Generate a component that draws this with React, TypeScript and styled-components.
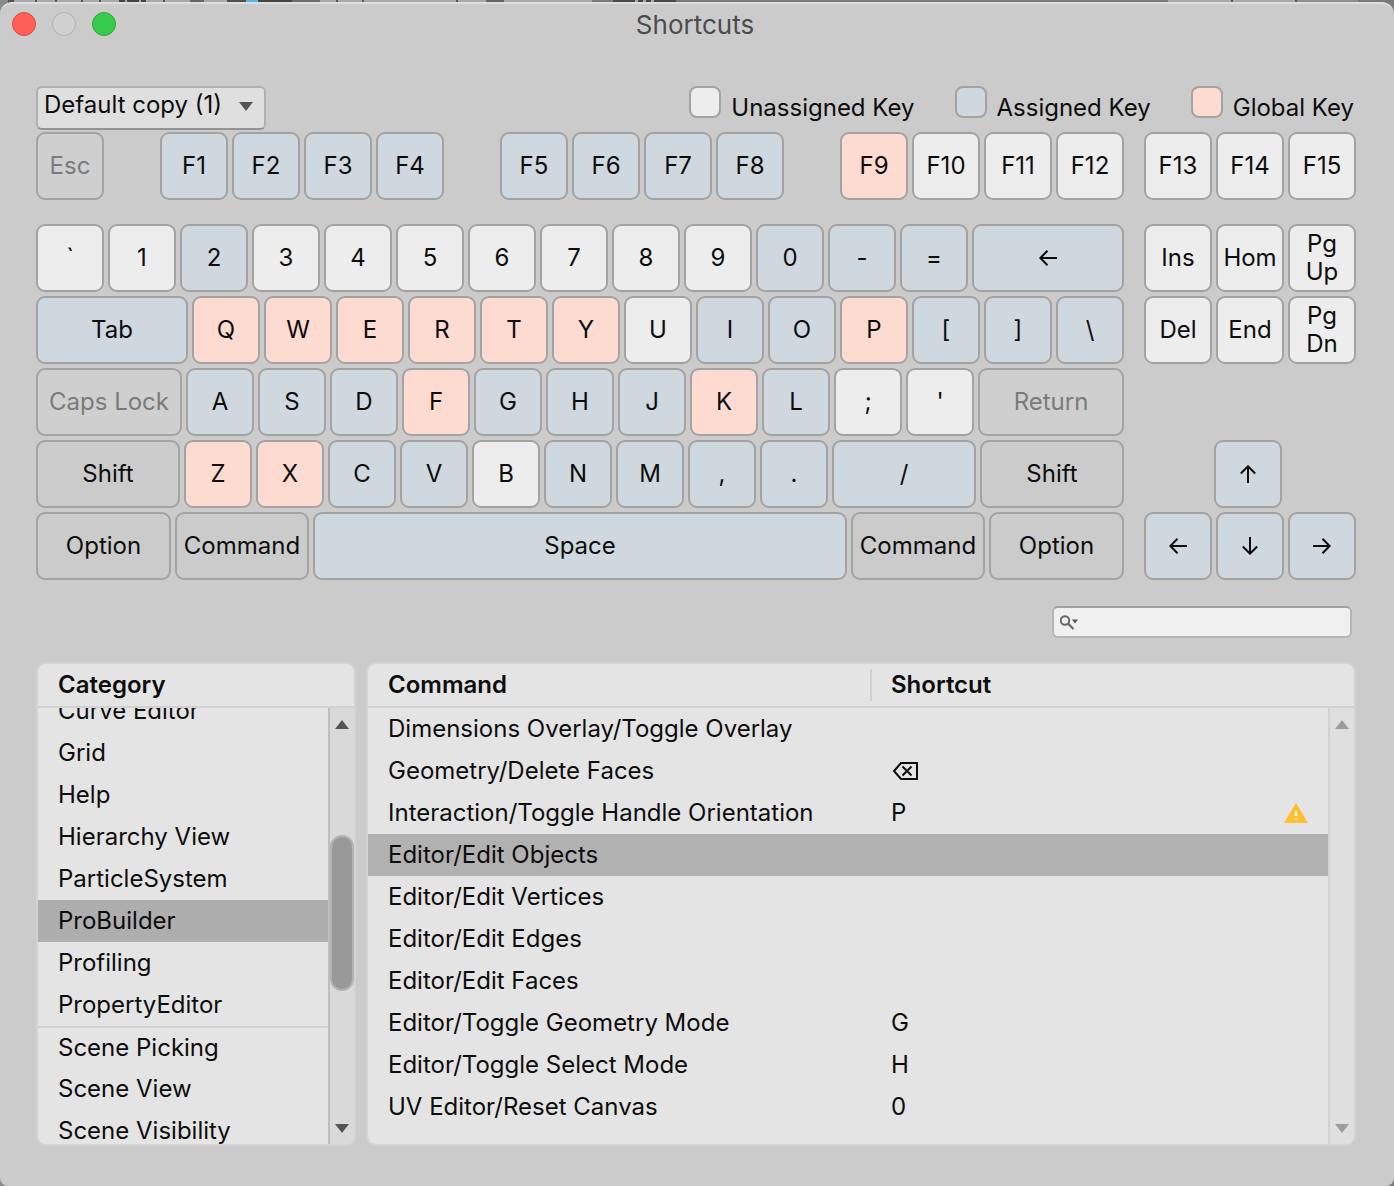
import React, { useLayoutEffect, useRef, useState } from "react";
import styled, { createGlobalStyle, css } from "styled-components";

type Tone = "free" | "assigned" | "global" | "system" | "modifier";

const keyFill: Record<Tone, string> = {
  free: "#ededed",
  assigned: "#cfd8de",
  global: "#fddbd0",
  system: "#cfcfcf",
  modifier: "#cbcbcb",
};

const Global = createGlobalStyle`
  *, *::before, *::after { box-sizing: border-box; }
  body {
    margin: 0;
    background: #7d7d7b;
    color: #0d0d0d;
    font: 24px/28px Inter, "Liberation Sans", sans-serif;
    font-optical-sizing: none;
    font-variation-settings: "opsz" 14;
  }
  button, input, select { font: inherit; color: inherit; font-variation-settings: inherit; }
`;

const Backdrop = styled.div`
  height: 100vh;
  min-height: 960px;
  padding-top: 2px;
  background: linear-gradient(
    90deg,
    #8a8a8a 0 8px, #555 8px 14px, #a9a9a9 14px 35px, #555 35px 37px, #a9a9a9 37px 55px,
    #555 55px 57px, #a9a9a9 57px 81px, #555 81px 83px, #a9a9a9 83px 99px, #555 99px 101px,
    #a9a9a9 101px 119px, #444 119px 125px, #a9a9a9 125px 127px, #444 127px 139px,
    #a9a9a9 139px 141px, #444 141px 146px, #a9a9a9 146px 163px, #555 163px 165px,
    #a9a9a9 165px 190px, #666 190px 204px, #a9a9a9 204px 227px, #505050 227px 246px,
    #55b4e0 246px 258px, #444 258px 292px, #6c6c6c 292px 320px, #a9a9a9 320px 336px,
    #555 336px 338px, #a9a9a9 338px 362px, #555 362px 364px, #a9a9a9 364px 456px,
    #555 456px 458px, #a9a9a9 458px 486px, #666 486px 504px, #a9a9a9 504px 592px,
    #7a7a78 592px 613px, #4a4a4a 613px 635px, #a9a9a9 635px 638px, #444 638px 643px,
    #a9a9a9 643px 646px, #444 646px 651px, #a9a9a9 651px 654px, #4a4a4a 654px 676px,
    #7a7a78 676px 1168px, #a9a9a9 1168px 1231px, #555 1231px 1233px, #a9a9a9 1233px 1295px,
    #555 1295px 1297px, #8e8e8c 1297px 1358px, #7a7a78 1358px
  );
`;

const Window = styled.main`
  display: flex;
  flex-direction: column;
  height: 100%;
  padding: 0 38px 40px 36px;
  background: #cbcbcb;
  border-top: 2px solid #dedede;
  border-radius: 12px 12px 8px 8px;
`;

const TitleBar = styled.header`
  display: grid;
  grid-template-columns: 1fr auto 1fr;
  align-items: center;
  height: 40px;
  margin: 0 -38px 0 -36px;
  padding: 0 16px 0 12px;
`;

const Lights = styled.div`
  display: flex;
  gap: 16px;
`;

const Light = styled.button<{ $fill: string; $edge: string }>`
  width: 24px;
  height: 24px;
  padding: 0;
  border: 1px solid ${(p) => p.$edge};
  border-radius: 50%;
  background: ${(p) => p.$fill};
`;

const Title = styled.h1`
  margin: 0;
  padding-top: 2px;
  color: #4c4c4c;
  font-size: 26px;
  font-weight: 400;
  line-height: 32px;
`;

const Toolbar = styled.div`
  display: flex;
  justify-content: space-between;
  height: 46px;
  margin-top: 42px;
`;

const ProfileBox = styled.div`
  position: relative;
  width: 230px;
  height: 44px;
  color: #545450;

  svg {
    position: absolute;
    top: 16px;
    right: 13px;
    pointer-events: none;
  }
`;

const Profile = styled.select`
  appearance: none;
  width: 100%;
  height: 100%;
  padding: 0 32px 6px 6px;
  border: 2px solid #b0b0b0;
  border-bottom-color: #939393;
  border-radius: 6px;
  background: #dfdfdf;
  color: #0d0d0d;
`;

const Legend = styled.ul`
  display: flex;
  gap: 40px;
  margin: 0;
  padding: 0 2px 0 0;
  list-style: none;
`;

const LegendItem = styled.li`
  display: flex;
  gap: 10px;
  line-height: 44px;
`;

const Swatch = styled.span<{ $tone: Tone }>`
  width: 32px;
  height: 32px;
  border: 2px solid #a3a3a3;
  border-radius: 8px;
  background: ${(p) => keyFill[p.$tone]};
`;

const Keyboard = styled.section`
  display: flex;
  gap: 20px;
`;

const Block = styled.div<{ $grow: number }>`
  display: flex;
  flex: ${(p) => p.$grow} 1 0;
  flex-direction: column;
  gap: 4px;
  min-width: 0;
`;

const Row = styled.div<{ $apart?: boolean }>`
  display: flex;
  gap: 4px;
  height: 68px;
  margin-bottom: ${(p) => (p.$apart ? "20px" : "0")};
`;

const Gap = styled.span<{ $w: number }>`
  flex: ${(p) => `${p.$w} 1 ${p.$w}px`};
`;

const KeyCap = styled.button<{ $w: number; $tone: Tone }>`
  display: flex;
  flex: ${(p) => `${p.$w} 1 ${p.$w}px`};
  align-items: center;
  justify-content: center;
  min-width: 0;
  padding: 0;
  border: 2px solid #a3a3a3;
  border-radius: 9px;
  background: ${(p) => keyFill[p.$tone]};
  color: ${(p) => (p.$tone === "system" ? "#7b7b7b" : "#0d0d0d")};
  white-space: pre;
`;

const SearchRow = styled.div`
  display: flex;
  justify-content: flex-end;
  margin: 26px 0 24px;
  padding-right: 4px;
`;

const SearchBox = styled.label`
  display: flex;
  align-items: center;
  gap: 6px;
  width: 300px;
  height: 32px;
  padding: 0 6px;
  border: 2px solid #b5b5b5;
  border-top-color: #a0a0a0;
  border-radius: 6px;
  background: #f0f0f0;
`;

const SearchInput = styled.input`
  flex: 1;
  min-width: 0;
  height: 28px;
  padding: 0;
  border: 0;
  outline: 0;
  background: transparent;
`;

const Panels = styled.div`
  display: flex;
  flex: 1;
  gap: 10px;
  min-height: 0;
`;

const panel = css`
  display: flex;
  overflow: hidden;
  border: 2px solid #d3d3d3;
  border-radius: 10px;
  background: #e4e4e4;
`;

const CategoryPanel = styled.section`
  ${panel}
  flex: 0 0 320px;
  flex-direction: column;
`;

const CommandPanel = styled.section`
  ${panel}
  flex: 1;
`;

const PanelTitle = styled.h2`
  flex: none;
  height: 44px;
  margin: 0;
  padding-left: 20px;
  border-bottom: 2px solid #d1d1d1;
  font-size: 24px;
  font-weight: 600;
  line-height: 42px;
`;

const PanelBody = styled.div`
  display: flex;
  flex: 1;
  min-height: 0;
`;

const CategoryList = styled.ul`
  flex: 1;
  min-width: 0;
  margin: 0;
  padding: 0;
  overflow-y: auto;
  list-style: none;
  scrollbar-width: none;
`;

const CategoryItem = styled.li<{ $ruled?: boolean; $active: boolean }>`
  height: 42px;
  border-top: ${(p) => (p.$ruled ? "2px solid #d1d1d1" : "0")};
  background: ${(p) => (p.$active ? "#aeaeae" : "transparent")};
`;

const CategoryButton = styled.button`
  display: block;
  width: 100%;
  height: 100%;
  padding: 0 0 0 20px;
  border: 0;
  background: none;
  text-align: left;
  white-space: nowrap;
`;

const TableArea = styled.div`
  flex: 1;
  min-width: 0;
  overflow-y: auto;
  scrollbar-width: none;
`;

const Table = styled.table`
  width: 100%;
  border-collapse: separate;
  border-spacing: 0;
  table-layout: fixed;
`;

const HeadCell = styled.th<{ $width?: string }>`
  width: ${(p) => p.$width ?? "auto"};
  height: 44px;
  padding: 0 0 0 ${(p) => (p.$width ? "20px" : "0")};
  border-bottom: 2px solid #d1d1d1;
  font-weight: 600;
  text-align: left;
`;

const HeadRule = styled.div`
  padding-left: 19px;
  border-left: 2px solid #d1d1d1;
  line-height: 32px;
`;

const CommandRow = styled.tr<{ $active: boolean }>`
  background: ${(p) => (p.$active ? "#b1b1b1" : "transparent")};
`;

const Cell = styled.td`
  height: 42px;
  padding: 0 20px;
  white-space: nowrap;
`;

const ShortcutValue = styled.div`
  display: flex;
  align-items: center;
  justify-content: space-between;
  padding-left: 1px;
`;

const RailColumn = styled.div`
  display: flex;
  flex: none;
  flex-direction: column;
  width: 26px;
`;

const RailHead = styled.div`
  flex: none;
  height: 44px;
  border-bottom: 2px solid #d1d1d1;
`;

const RailBox = styled.div<{ $idle?: boolean }>`
  display: flex;
  flex: 1;
  flex-direction: column;
  border-left: 2px solid ${(p) => (p.$idle ? "#d1d1d1" : "#bebebe")};
  background: ${(p) => (p.$idle ? "#dfdfdf" : "#d9d9d9")};
  color: ${(p) => (p.$idle ? "#9c9c98" : "#545450")};
`;

const RailButton = styled.button`
  display: flex;
  align-items: center;
  justify-content: center;
  height: 32px;
  padding: 0;
  border: 0;
  background: none;
`;

const Track = styled.div`
  display: flex;
  flex: 1;
  flex-direction: column;
`;

const Thumb = styled.div`
  flex: 154 1 0;
  border: 2px solid #b2b2b2;
  border-radius: 12px;
  background: #999;
`;

const Space = styled.div<{ $grow: number }>`
  flex: ${(p) => p.$grow} 1 0;
`;

const Triangle = ({ up }: { up?: boolean }) => (
  <svg width="14" height="9" viewBox="0 0 14 9" aria-hidden="true">
    <path d={up ? "M0 9 7 0l7 9z" : "M0 0h14L7 9z"} fill="currentColor" />
  </svg>
);

const turns = { left: 0, up: 90, right: 180, down: 270 };

const Arrow = ({ to }: { to: keyof typeof turns }) => (
  <svg width="18" height="18" viewBox="0 0 18 18" role="img" aria-label={to}>
    <path
      d="M18 9H1M8.500 1.800 1.300 9l7.200 7.200"
      transform={`rotate(${turns[to]} 9 9)`}
      fill="none"
      stroke="#0d0d0d"
      strokeWidth="2"
    />
  </svg>
);

const DeleteGlyph = () => (
  <svg width="28" height="20" viewBox="0 0 28 20" role="img" aria-label="Delete">
    <path d="M10 2h16v16H10L3 10z" fill="none" stroke="#0d0d0d" strokeWidth="2" />
    <path d="m11.500 5.500 9 9m0-9-9 9" stroke="#0d0d0d" strokeWidth="2" />
  </svg>
);

const Warning = () => (
  <svg width="24" height="20" viewBox="0 0 24 20" role="img" aria-label="Conflict">
    <path d="M12 0 24 20H0z" fill="#ffc02f" />
    <path d="M11 8h2v5h-2zM11 15h2v2h-2z" fill="#fff" />
  </svg>
);

const SearchIcon = () => (
  <svg width="18" height="15" viewBox="0 0 18 15" aria-hidden="true">
    <circle cx="5" cy="5.500" r="4.200" fill="none" stroke="#666" strokeWidth="2" />
    <path d="m8 8.500 5.500 5.500" stroke="#666" strokeWidth="2.200" />
    <path d="M12 4.500h6l-3 4z" fill="#555" />
  </svg>
);

type KeySpec = { label: React.ReactNode; tone: Tone; w?: number } | number;

const run = (labels: string, tones: string): KeySpec[] => {
  const map: Record<string, Tone> = { u: "free", a: "assigned", g: "global" };
  return labels.split(" ").map((label, i) => ({ label, tone: map[tones[i]] }));
};

const mainRows: KeySpec[][] = [
  [
    { label: "Esc", tone: "system" },
    48,
    ...run("F1 F2 F3 F4", "aaaa"),
    48,
    ...run("F5 F6 F7 F8", "aaaa"),
    48,
    ...run("F9 F10 F11 F12", "guuu"),
  ],
  [
    ...run("` 1 2 3 4 5 6 7 8 9 0 - =", "uuauuuuuuuaaa"),
    { label: <Arrow to="left" />, tone: "assigned", w: 152 },
  ],
  [{ label: "Tab", tone: "assigned", w: 152 }, ...run("Q W E R T Y U I O P [ ] \\", "gggggguaagaaa")],
  [
    { label: "Caps Lock", tone: "system", w: 146 },
    ...run("A S D F G H J K L ; '", "aaagaaagauu"),
    { label: "Return", tone: "system", w: 146 },
  ],
  [
    { label: "Shift", tone: "modifier", w: 144 },
    ...run("Z X C V B N M , .", "ggaauaaaa"),
    { label: "/", tone: "assigned", w: 144 },
    { label: "Shift", tone: "modifier", w: 144 },
  ],
  [
    { label: "Option", tone: "modifier", w: 135 },
    { label: "Command", tone: "modifier", w: 134 },
    { label: "Space", tone: "assigned", w: 534 },
    { label: "Command", tone: "modifier", w: 134 },
    { label: "Option", tone: "modifier", w: 135 },
  ],
];

const sideRows: KeySpec[][] = [
  run("F13 F14 F15", "uuu"),
  [...run("Ins Hom", "uu"), { label: "Pg\nUp", tone: "free" }],
  [...run("Del End", "uu"), { label: "Pg\nDn", tone: "free" }],
  [212],
  [66, { label: <Arrow to="up" />, tone: "assigned" }, 70],
  [
    { label: <Arrow to="left" />, tone: "assigned" },
    { label: <Arrow to="down" />, tone: "assigned" },
    { label: <Arrow to="right" />, tone: "assigned" },
  ],
];

const KeyRows = ({ rows }: { rows: KeySpec[][] }) => (
  <>
    {rows.map((row, r) => (
      <Row key={r} $apart={r === 0}>
        {row.map((k, i) =>
          typeof k === "number" ? (
            <Gap key={i} $w={k} />
          ) : (
            <KeyCap key={i} type="button" $w={k.w ?? 68} $tone={k.tone} disabled={k.tone === "system"}>
              {k.label}
            </KeyCap>
          )
        )}
      </Row>
    ))}
  </>
);

const Rail = ({ idle }: { idle?: boolean }) => (
  <RailBox $idle={idle}>
    <RailButton type="button" aria-label="Scroll up">
      <Triangle up />
    </RailButton>
    <Track>
      {!idle && (
        <>
          <Space $grow={96} />
          <Thumb />
          <Space $grow={122} />
        </>
      )}
    </Track>
    <RailButton type="button" aria-label="Scroll down">
      <Triangle />
    </RailButton>
  </RailBox>
);

const categories = [
  "Curve Editor",
  "Grid",
  "Help",
  "Hierarchy View",
  "ParticleSystem",
  "ProBuilder",
  "Profiling",
  "PropertyEditor",
  "Scene Picking",
  "Scene View",
  "Scene Visibility",
];

const commands: { name: string; shortcut?: React.ReactNode; conflict?: boolean }[] = [
  { name: "Dimensions Overlay/Toggle Overlay" },
  { name: "Geometry/Delete Faces", shortcut: <DeleteGlyph /> },
  { name: "Interaction/Toggle Handle Orientation", shortcut: "P", conflict: true },
  { name: "Editor/Edit Objects" },
  { name: "Editor/Edit Vertices" },
  { name: "Editor/Edit Edges" },
  { name: "Editor/Edit Faces" },
  { name: "Editor/Toggle Geometry Mode", shortcut: "G" },
  { name: "Editor/Toggle Select Mode", shortcut: "H" },
  { name: "UV Editor/Reset Canvas", shortcut: "0" },
];

const legend: [string, Tone][] = [
  ["Unassigned Key", "free"],
  ["Assigned Key", "assigned"],
  ["Global Key", "global"],
];

export default function App() {
  const [category, setCategory] = useState("ProBuilder");
  const [command, setCommand] = useState("Editor/Edit Objects");
  const [query, setQuery] = useState("");
  const list = useRef<HTMLUListElement>(null);

  useLayoutEffect(() => {
    if (list.current) list.current.scrollTop = 18;
  }, []);

  return (
    <Backdrop>
      <Global />
      <Window>
        <TitleBar>
          <Lights>
            <Light type="button" aria-label="Close" $fill="#fe5f58" $edge="#e2463f" />
            <Light type="button" aria-label="Minimize" $fill="#d0d0d0" $edge="#b4b4b4" />
            <Light type="button" aria-label="Zoom" $fill="#35cc4b" $edge="#27aa35" />
          </Lights>
          <Title>Shortcuts</Title>
        </TitleBar>

        <Toolbar>
          <ProfileBox>
            <Profile aria-label="Profile" defaultValue="Default copy (1)">
              <option>Default copy (1)</option>
            </Profile>
            <Triangle />
          </ProfileBox>
          <Legend>
            {legend.map(([text, tone]) => (
              <LegendItem key={text}>
                <Swatch $tone={tone} />
                {text}
              </LegendItem>
            ))}
          </Legend>
        </Toolbar>

        <Keyboard aria-label="Keyboard">
          <Block $grow={1088}>
            <KeyRows rows={mainRows} />
          </Block>
          <Block $grow={212}>
            <KeyRows rows={sideRows} />
          </Block>
        </Keyboard>

        <SearchRow>
          <SearchBox>
            <SearchIcon />
            <SearchInput
              type="text"
              aria-label="Search shortcuts"
              value={query}
              onChange={(e) => setQuery(e.target.value)}
            />
          </SearchBox>
        </SearchRow>

        <Panels>
          <CategoryPanel>
            <PanelTitle>Category</PanelTitle>
            <PanelBody>
              <CategoryList ref={list}>
                {categories.map((name) => (
                  <CategoryItem key={name} $active={name === category} $ruled={name === "Scene Picking"}>
                    <CategoryButton type="button" onClick={() => setCategory(name)}>
                      {name}
                    </CategoryButton>
                  </CategoryItem>
                ))}
              </CategoryList>
              <RailColumn>
                <Rail />
              </RailColumn>
            </PanelBody>
          </CategoryPanel>

          <CommandPanel>
            <TableArea>
              <Table>
                <thead>
                  <tr>
                    <HeadCell $width="502px">Command</HeadCell>
                    <HeadCell>
                      <HeadRule>Shortcut</HeadRule>
                    </HeadCell>
                  </tr>
                </thead>
                <tbody>
                  {commands.map((c) => (
                    <CommandRow key={c.name} $active={c.name === command} onClick={() => setCommand(c.name)}>
                      <Cell>{c.name}</Cell>
                      <Cell>
                        <ShortcutValue>
                          {c.shortcut}
                          {c.conflict && <Warning />}
                        </ShortcutValue>
                      </Cell>
                    </CommandRow>
                  ))}
                </tbody>
              </Table>
            </TableArea>
            <RailColumn>
              <RailHead />
              <Rail idle />
            </RailColumn>
          </CommandPanel>
        </Panels>
      </Window>
    </Backdrop>
  );
}
